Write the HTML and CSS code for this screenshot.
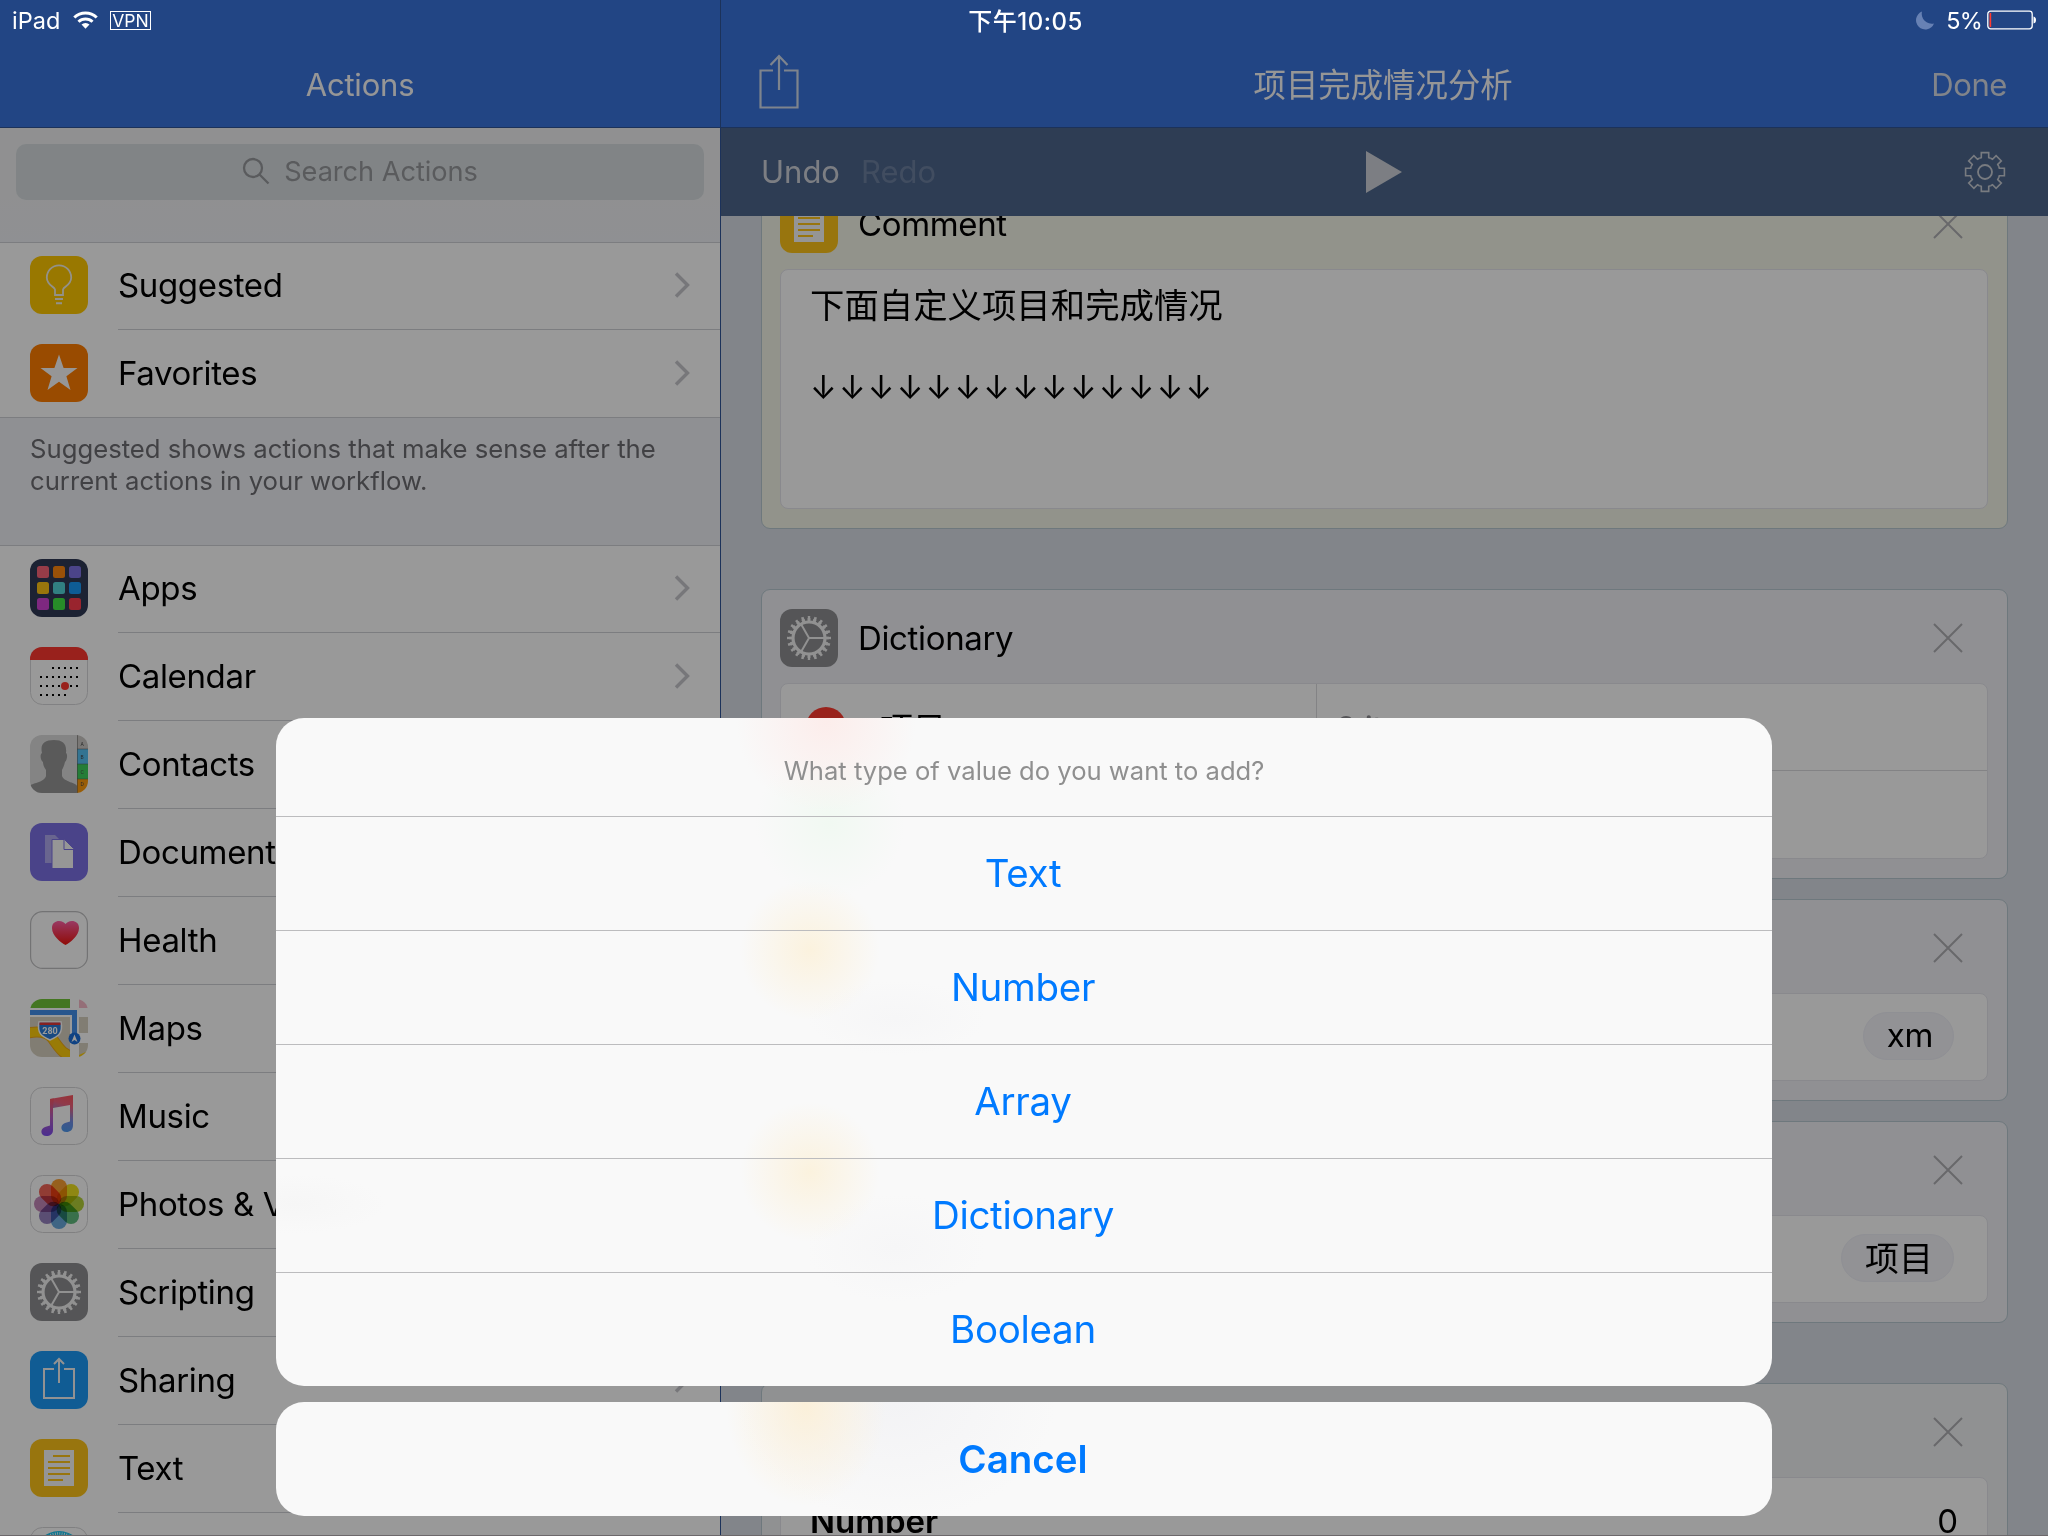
FILE: index.html
```html
<!DOCTYPE html>
<html lang="zh-CN">
<head>
<meta charset="utf-8">
<title>Workflow</title>
<link rel="stylesheet" href="styles.css">
</head>
<body>
<svg class="defs" width="0" height="0" aria-hidden="true">
  <defs>
    <symbol id="chevron" viewBox="0 0 18 28"><path d="M3 2.500 14.500 14 3 25.500" fill="none" stroke="#c7c7cc" stroke-width="3.400"/></symbol>
    <symbol id="close" viewBox="0 0 30 30"><path d="M1 1 29 29M29 1 1 29" fill="none" stroke="#aeaeb2" stroke-width="2"/></symbol>
    <symbol id="cog" viewBox="0 0 58 58">
      <rect width="58" height="58" rx="12" fill="#8e8e91"/>
      <g fill="none" stroke="#f2f2f2">
        <circle cx="29" cy="29" r="16" stroke-width="3.200"/>
        <circle cx="29" cy="29" r="18.200" stroke-width="3" pathLength="200" stroke-dasharray="5.500 4.500" stroke-dashoffset="2.750"/>
        <circle cx="29" cy="29" r="20.500" stroke-width="3" pathLength="200" stroke-dasharray="3.800 6.200" stroke-dashoffset="1.900"/>
        <path d="M29 29H45M29 29 21 15.100M29 29 21 42.900" stroke-width="2"/>
      </g>
    </symbol>
    <symbol id="note" viewBox="0 0 58 58">
      <rect width="58" height="58" rx="12" fill="#fec418"/>
      <path d="M14 11H44V47H14Z" fill="#f8f8f8"/>
      <path d="M23 17H40M18 23H40M18 29H40M18 35H40M18 41H33" stroke="#fec418" stroke-width="2"/>
    </symbol>
    <symbol id="tooth" viewBox="-21 -21 42 42"><path d="M-5.700-13.700-3.700-14.300V-19.400H3.700V-14.300L5.700-13.700" fill="none" stroke="#c9ced6" stroke-width="1.600"/></symbol>
    <linearGradient id="heart" x1="0" y1="0" x2="0" y2="1"><stop offset="0" stop-color="#ff5fa5"/><stop offset="1" stop-color="#f0140c"/></linearGradient>
    <linearGradient id="tune" x1=".7" y1="0" x2=".5" y2="1"><stop offset="0" stop-color="#fb5660"/><stop offset=".25" stop-color="#f0607c"/><stop offset=".65" stop-color="#6f8de6"/><stop offset="1" stop-color="#4b9bf0"/></linearGradient>
    <linearGradient id="tuneLeft" x1="0" y1="0" x2="0" y2="1"><stop offset="0" stop-color="#fb5660"/><stop offset=".5" stop-color="#b45fc0"/><stop offset="1" stop-color="#7d4df0"/></linearGradient>
    <clipPath id="tile"><rect width="58" height="58" rx="12"/></clipPath>
  </defs>
</svg>

<div class="screen">
  <div class="split">
    <aside class="sidebar">
      <header class="navbar"><h1>Actions</h1></header>
      <div class="search-area">
        <div class="search">
          <svg width="28" height="28" viewBox="0 0 28 28"><g fill="none" stroke="#96989c" stroke-width="2.300"><circle cx="11" cy="11" r="9"/><path d="M17.500 17.500 26.500 26.500"/></g></svg>
          <span>Search Actions</span>
        </div>
      </div>
      <ul class="group">
        <li class="row">
          <svg class="icon" viewBox="0 0 58 58"><rect width="58" height="58" rx="12" fill="#ffc800"/><g fill="none" stroke="#f5f2e6" stroke-width="1.800"><path d="M25 39V33.500C24 30.500 16.800 29 16.800 21.500A12.200 12.200 0 0 1 41.200 21.500C41.200 29 34 30.500 33 33.500V39Z"/><path d="M25 43H33M26 47.200H32" stroke-width="2"/></g></svg>
          <span class="label">Suggested</span><svg class="chev"><use href="#chevron"/></svg>
        </li>
        <li class="row">
          <svg class="icon" viewBox="0 0 58 58"><rect width="58" height="58" rx="12" fill="#ff7d00"/><path d="M29 10.500 33.600 24H47.500L36.400 32.300 40.500 46 29 37.800 17.500 46 21.600 32.300 10.500 24H24.400Z" fill="#fafafa"/></svg>
          <span class="label">Favorites</span><svg class="chev"><use href="#chevron"/></svg>
        </li>
      </ul>
      <p class="footnote">Suggested shows actions that make sense after the<br>current actions in your workflow.</p>
      <ul class="group">
        <li class="row">
          <svg class="icon" viewBox="0 0 58 58"><rect width="58" height="58" rx="12" fill="#303955"/>
            <rect x="7" y="7" width="12" height="12" rx="2.500" fill="#fb6478"/><rect x="23" y="7" width="12" height="12" rx="2.500" fill="#ff880e"/><rect x="39" y="7" width="12" height="12" rx="2.500" fill="#7d72e4"/>
            <rect x="7" y="23" width="12" height="12" rx="2.500" fill="#ffc414"/><rect x="23" y="23" width="12" height="12" rx="2.500" fill="#52d6d8"/><rect x="39" y="23" width="12" height="12" rx="2.500" fill="#1899f8"/>
            <rect x="7" y="39" width="12" height="12" rx="2.500" fill="#d244d5"/><rect x="23" y="39" width="12" height="12" rx="2.500" fill="#41e943"/><rect x="39" y="39" width="12" height="12" rx="2.500" fill="#ff3c4e"/></svg>
          <span class="label">Apps</span><svg class="chev"><use href="#chevron"/></svg>
        </li>
        <li class="row">
          <svg class="icon" viewBox="0 0 58 58"><rect x=".5" y=".5" width="57" height="57" rx="12" fill="#fff" stroke="#d8d8da"/><path d="M0 13V12A12 12 0 0 1 12 0H46A12 12 0 0 1 58 12V13Z" fill="#ff3830"/><path d="M22 21H49M10 30H49M10 39H49M10 48H37" stroke="#000" stroke-width="2" stroke-dasharray="2 4"/><circle cx="35" cy="39" r="4" fill="#ff3830"/></svg>
          <span class="label">Calendar</span><svg class="chev"><use href="#chevron"/></svg>
        </li>
        <li class="row">
          <svg class="icon" viewBox="0 0 58 58"><g clip-path="url(#tile)"><path d="M0 0H47V58H0Z" fill="#dcdcdc"/><path d="M24 5C33 5 37 9 36 18 38 19 37 26 35 27 34 31 33 33 32 35V41C34 47 47 48 47 51V58H0V51C1 48 14 48 16 41V35C14 32 13 30 13 27 10 25 10 19 12 18 10 9 14 5 24 5Z" fill="#979797"/><path d="M47 0H58V14H47Z" fill="#ccc9c5"/><path d="M47 14H58V29H47Z" fill="#56c1f4"/><path d="M47 29H58V44H47Z" fill="#3fd15d"/><path d="M47 44H58V58H47Z" fill="#ff9b0a"/><path d="M47.500 0V58M47 14H58M47 29H58M47 44H58" stroke="#555" stroke-opacity=".5" fill="none"/><g class="tabs"><text x="50.500" y="11">A</text><text x="50.500" y="24">B</text><text x="50.500" y="39">C</text><text x="50.500" y="51">D</text></g></g></svg>
          <span class="label">Contacts</span>
        </li>
        <li class="row">
          <svg class="icon" viewBox="0 0 58 58"><rect width="58" height="58" rx="12" fill="#7c71e5"/><path d="M15 12H25L31 18V40H15Z" fill="#b0a8ee"/><path d="M22 16.500H34.500L43.500 25.500V45.500H22Z" fill="#fafafa" stroke="#7c71e5"/><path d="M34 16.500V26.500H43.500" fill="none" stroke="#7c71e5"/></svg>
          <span class="label">Documents</span>
        </li>
        <li class="row">
          <svg class="icon" viewBox="0 0 58 58"><rect x=".6" y=".6" width="56.800" height="56.800" rx="12" fill="#fff" stroke="#c0c0c2" stroke-width="1.200"/><path d="M35.500 34C31 31.500 22 25 22 17 22 12 25.500 10 29 10 32 10 34.500 11.500 35.500 13 36.500 11.500 39 10 42 10 45.500 10 49 12 49 17 49 25 40 31.500 35.500 34Z" fill="url(#heart)"/></svg>
          <span class="label">Health</span>
        </li>
        <li class="row">
          <svg class="icon" viewBox="0 0 58 58"><g clip-path="url(#tile)"><path d="M0 0H58V58H0Z" fill="#fff"/><path d="M0 0H40V9H0Z" fill="#72c538"/><path d="M49 0H58V9H49Z" fill="#f7b9c9"/><path d="M0 18H40V58H0Z" fill="#d8d1c0"/><path d="M49 18H58V34H49ZM49 44H58V58H49Z" fill="#d8d1c0"/><path d="M-2 34C8 32 17 33 22 39 28 47 33 57 44 57" fill="none" stroke="#f0a816" stroke-width="11"/><path d="M-2 34C8 32 17 33 22 39 28 47 33 57 44 57" fill="none" stroke="#ffce0a" stroke-width="9"/><path d="M40 18H49V58H40Z" fill="#fff"/><path d="M49 56 58 52V58H49Z" fill="#ffce0a"/><path d="M0 13.500H44.500V36" fill="none" stroke="#438fec" stroke-width="5"/><circle cx="44.500" cy="39.500" r="6" fill="#1a6fda"/><path d="M44.500 35.500 47.500 43 44.500 41 41.500 43Z" fill="#fff"/><path d="M9 23H31C33 34 29 37 20 41 11 37 7 34 9 23Z" fill="#2a7bd8" stroke="#fff" stroke-width="1.500"/><path d="M9.500 23.500H30.500V26H9.500Z" fill="#e03838"/></g><text class="shield" x="20" y="35">280</text></svg>
          <span class="label">Maps</span>
        </li>
        <li class="row">
          <svg class="icon" viewBox="0 0 58 58"><rect x=".5" y=".5" width="57" height="57" rx="12" fill="#fff" stroke="#d6d6d8"/><path d="M20 12 43 8V38C43 43 40 45 36.500 45 30.500 45 29.500 38 35 36L40 34.500V18L23 21 20 19Z" fill="url(#tune)"/><path d="M20 12 24 11.500 23 21V43C23 47 20 49 16.500 49 10.500 49 9.500 42 15 40L20 38.500Z" fill="url(#tuneLeft)"/></svg>
          <span class="label">Music</span>
        </li>
        <li class="row">
          <svg class="icon" viewBox="0 0 58 58"><rect x=".5" y=".5" width="57" height="57" rx="12" fill="#fff" stroke="#d6d6d8"/>
            <g class="petals" transform="translate(29 29)">
              <rect x="-8" y="-25" width="16" height="25" rx="8" fill="#faa032"/><rect x="-8" y="-25" width="16" height="25" rx="8" fill="#eee11e" transform="rotate(45)"/><rect x="-8" y="-25" width="16" height="25" rx="8" fill="#b3cf38" transform="rotate(90)"/><rect x="-8" y="-25" width="16" height="25" rx="8" fill="#60bb7e" transform="rotate(135)"/><rect x="-8" y="-25" width="16" height="25" rx="8" fill="#69a9dc" transform="rotate(180)"/><rect x="-8" y="-25" width="16" height="25" rx="8" fill="#9683c0" transform="rotate(225)"/><rect x="-8" y="-25" width="16" height="25" rx="8" fill="#c487b8" transform="rotate(270)"/><rect x="-8" y="-25" width="16" height="25" rx="8" fill="#f26458" transform="rotate(315)"/>
            </g></svg>
          <span class="label">Photos &amp; Videos</span>
        </li>
        <li class="row"><svg class="icon"><use href="#cog"/></svg><span class="label">Scripting</span></li>
        <li class="row">
          <svg class="icon" viewBox="0 0 58 58"><rect width="58" height="58" rx="12" fill="#1b9af7"/><path d="M24 18H14V47H44V18H34M29 32V8.500M24 13 29 8 34 13" fill="none" stroke="#f4f4f4" stroke-width="2"/></svg>
          <span class="label">Sharing</span><svg class="chev"><use href="#chevron"/></svg>
        </li>
        <li class="row"><svg class="icon"><use href="#note"/></svg><span class="label">Text</span></li>
        <li class="row">
          <svg class="icon" viewBox="0 0 58 58"><rect x=".5" y=".5" width="57" height="57" rx="12" fill="#fff" stroke="#d6d6d8"/><circle cx="29" cy="29" r="25" fill="#1cc5f0"/><circle cx="29" cy="29" r="22.500" fill="none" stroke="#fff" stroke-width="2.500" stroke-dasharray=".8 1.500"/></svg>
        </li>
      </ul>
    </aside>

    <main class="editor">
      <header class="navbar navbar-editor">
        <svg width="40" height="56" viewBox="0 0 40 56"><path d="M14 16.500H1.500V53.500H38.500V16.500H25M20 36V2M11.500 11 20 2 28.500 11" fill="none" stroke="#d3dcec" stroke-width="2.200"/></svg>
        <h1 class="cjk">项目完成情况分析</h1>
        <span class="done">Done</span>
      </header>
      <div class="toolbar">
        <div class="history"><span>Undo</span><span class="off">Redo</span></div>
        <svg width="36" height="42" viewBox="0 0 36 42"><path d="M0 0 36 21 0 42Z" fill="#cfd3da"/></svg>
        <svg class="settings" width="42" height="42" viewBox="-21 -21 42 42">
          <circle r="7" fill="none" stroke="#c9ced6" stroke-width="1.800"/>
          <g class="teeth"><use href="#tooth" x="-21" y="-21" width="42" height="42"/><use href="#tooth" x="-21" y="-21" width="42" height="42" transform="rotate(45)"/><use href="#tooth" x="-21" y="-21" width="42" height="42" transform="rotate(90)"/><use href="#tooth" x="-21" y="-21" width="42" height="42" transform="rotate(135)"/><use href="#tooth" x="-21" y="-21" width="42" height="42" transform="rotate(180)"/><use href="#tooth" x="-21" y="-21" width="42" height="42" transform="rotate(225)"/><use href="#tooth" x="-21" y="-21" width="42" height="42" transform="rotate(270)"/><use href="#tooth" x="-21" y="-21" width="42" height="42" transform="rotate(315)"/></g>
        </svg>
      </div>
      <div class="canvas">
        <div class="cards">
          <section class="card card-comment">
            <header class="card-head"><svg class="icon"><use href="#note"/></svg><h2>Comment</h2><svg class="close"><use href="#close"/></svg></header>
            <div class="box comment"><p>下面自定义项目和完成情况</p><p class="arrows">↓↓↓↓↓↓↓↓↓↓↓↓↓↓</p></div>
          </section>
          <section class="card spaced">
            <header class="card-head"><svg class="icon"><use href="#cog"/></svg><h2>Dictionary</h2><svg class="close"><use href="#close"/></svg></header>
            <div class="box">
              <div class="entry"><div class="key"><i class="remove"></i><span>项目</span></div><div class="value">2 items</div></div>
              <div class="line"></div>
            </div>
          </section>
          <section class="card">
            <header class="card-head"><svg class="close"><use href="#close"/></svg></header>
            <div class="box"><div class="line"><span class="pill">xm</span></div></div>
          </section>
          <section class="card">
            <header class="card-head"><svg class="close"><use href="#close"/></svg></header>
            <div class="box"><div class="line"><span class="pill pill-cjk">项目</span></div></div>
          </section>
          <section class="card card-number spaced">
            <header class="card-head"><svg class="close"><use href="#close"/></svg></header>
            <div class="box"><div class="line field"><b>Number</b><span>0</span></div></div>
          </section>
        </div>
      </div>
    </main>
  </div>

  <div class="dim"></div>

  <div class="statusbar">
    <div class="carrier"><span>iPad</span>
      <svg width="25" height="18" viewBox="0 0 25 18"><g fill="none" stroke="#fff" stroke-width="3"><path d="M1.300 6.500A16 16 0 0 1 23.700 6.500"/><path d="M5.500 10.800A10 10 0 0 1 19.500 10.800"/></g><path d="M8.500 13.500A5.800 5.800 0 0 1 16.500 13.500L12.500 17.800Z" fill="#fff"/></svg>
      <span class="vpn">VPN</span></div>
    <div class="clock">下午10:05</div>
    <div class="power">
      <svg width="20" height="19" viewBox="0 0 20 19"><path d="M7 .5A9.300 9.300 0 1 0 19 12.500 10 10 0 0 1 7 .5Z" fill="#6781b4"/></svg>
      <span>5%</span>
      <svg width="50" height="20" viewBox="0 0 50 20"><rect x=".8" y="1.200" width="44.400" height="17.600" rx="2.800" fill="none" stroke="#fff" stroke-width="1.300"/><path d="M2.500 3H4.200V17H2.500Z" fill="#ff3b30"/><path d="M46.500 6.500Q49 7 49 10T46.500 13.500Z" fill="#fff"/></svg>
    </div>
  </div>

  <div class="sheet">
    <div class="panel options">
      <p class="prompt">What type of value do you want to add?</p>
      <button>Text</button><button>Number</button><button>Array</button><button>Dictionary</button><button>Boolean</button>
    </div>
    <div class="panel cancel"><button>Cancel</button></div>
  </div>
</div>
</body>
</html>
```
FILE: styles.css
```css
* { box-sizing: border-box; margin: 0; padding: 0; }

body {
  width: 2048px;
  height: 1536px;
  overflow: hidden;
  font-family: Inter, "Noto Sans CJK SC", sans-serif;
  font-size: 33px;
  color: #000;
}

ul { list-style: none; }
svg { display: block; flex: none; }
.defs { position: absolute; }

.screen { position: relative; width: 2048px; height: 1536px; overflow: hidden; }
.split { display: flex; height: 1536px; border-bottom: 1px solid #b4adb2; }

.navbar {
  height: 128px;
  flex: none;
  padding-top: 41px;
  display: flex;
  align-items: center;
  justify-content: center;
  background: #3973dc;
  border-bottom: 1px solid #2f5496;
  color: #fff;
}
.navbar h1 { font-size: 31px; font-weight: 400; letter-spacing: -.2px; color: #fafafa; }

/* Left column */
.sidebar { width: 720px; flex: none; overflow: hidden; display: flex; flex-direction: column; background: #eff0f5; }
.search-area { height: 114px; flex: none; padding: 16px; background: linear-gradient(#f0f1f2 60%, #eff0f5); }
.search {
  height: 56px;
  padding: 0 0 2px;
  display: flex;
  align-items: center;
  justify-content: center;
  gap: 14px;
  border-radius: 10px;
  background: #d7dde0;
  color: #96989c;
  font-size: 27.200px;
  letter-spacing: -.05px;
}
.group { flex: none; background: #fff; box-shadow: inset 0 1px #cfd1d6; }
.row { position: relative; height: 88px; padding: 14px 29px 0 30px; display: flex; align-items: flex-start; }
.row::after { content: ""; position: absolute; left: 118px; right: 0; bottom: 0; height: 1px; background: #cfd1d6; }
.row:last-child::after { left: 0; }
.icon { width: 58px; height: 58px; }
.label { flex: 1; margin-left: 30px; line-height: 58px; letter-spacing: -.35px; white-space: nowrap; }
.chev { width: 18px; height: 28px; margin-top: 15px; }
.footnote { flex: none; height: 127px; padding: 15px 30px 0; font-size: 25.700px; line-height: 32px; color: #6d6d72; white-space: nowrap; }
.tabs { font: 5px Roboto, sans-serif; fill: #444; }
.shield { font: 700 9px Roboto, sans-serif; fill: #fff; text-anchor: middle; }
.petals { isolation: isolate; }
.petals rect { mix-blend-mode: multiply; }

/* Right column */
.editor { flex: 1; min-width: 0; display: flex; flex-direction: column; border-left: 1px solid #2f5496; background: #d9dee6; }
.navbar-editor { justify-content: space-between; padding: 37px 41px 0 38px; }
.navbar-editor h1.cjk { font-family: "Noto Sans CJK SC", sans-serif; font-size: 32.400px; font-weight: 400; letter-spacing: 0; margin-left: 36px; }
.done { font-size: 31px; letter-spacing: -.4px; color: #d8dde6; margin-top: 5px; }
.toolbar { height: 88px; flex: none; display: grid; grid-template-columns: 1fr auto 1fr; align-items: center; padding: 0 42px 0 40px; background: #4d668c; color: #cfd3da; font-size: 31px; }
.toolbar .settings { justify-self: end; }
.history { display: flex; gap: 21px; margin-top: -2px; }
.history .off { color: #6d80a1; }
.canvas { flex: 1; min-height: 0; overflow: hidden; }
.cards { margin-top: -41px; padding: 0 40px; display: flex; flex-direction: column; gap: 20px; }
.card { flex: none; padding: 19px 19px 19px 18px; border: 1px solid #b7c8d0; border-radius: 9px; background: #f0f1f6; }
.card-comment { background: #f4f5e8; }
.card-number { background: #f0f2f3; }
.spaced { margin-top: 40px; }
.card-head { height: 74px; padding: 0 25px 16px 0; display: flex; align-items: center; }
.card-head h2 { margin-left: 20px; font-size: 33px; font-weight: 400; letter-spacing: -.35px; }
.close { width: 30px; height: 30px; margin-left: auto; }
.box { border: 1px solid #e5e5ec; border-radius: 8px; background: #fff; }
.comment { height: 240px; padding: 6px 29px; font: 34.400px/54px "Noto Sans CJK SC", sans-serif; }
.comment .arrows { margin-top: 31px; font: 32px/54px Inter, sans-serif; letter-spacing: 2.200px; }
.entry { display: flex; height: 87px; border-bottom: 1px solid #dadade; }
.key { width: 536px; padding-left: 25px; display: flex; align-items: center; gap: 34px; border-right: 1px solid #dadade; }
.remove { width: 40px; height: 40px; border-radius: 50%; background: #ff3b30; }
.value { padding-left: 19px; line-height: 89px; letter-spacing: -.35px; color: #8e8e93; }
.line { height: 86px; display: flex; align-items: center; justify-content: flex-end; padding-right: 33px; }
.entry + .line { height: 87px; }
.pill { height: 48px; margin-bottom: 2px; padding: 0 20px 0 23px; border-radius: 24px; line-height: 44px; letter-spacing: -.35px; background: #f3f3f9; border: 1px solid #eff0f7; }
.pill-cjk { font: 34px/43px "Noto Sans CJK SC", sans-serif; letter-spacing: 0; }
.field { justify-content: space-between; padding: 0 29px 0 29px; }
.field b { font-weight: 600; }

/* Dimming layer with the status bar kept bright above it */
.dim { position: absolute; inset: 0; background: rgba(0, 0, 0, .4); }
.statusbar {
  position: absolute;
  inset: 0 0 auto;
  height: 40px;
  padding: 0 11px 0 12px;
  display: grid;
  grid-template-columns: 1fr auto 1fr;
  align-items: center;
  color: #fff;
  font-size: 23.500px;
}
.carrier, .power { display: flex; align-items: center; }
.carrier svg { margin: 0 12px 0 13px; }
.vpn { height: 19px; padding: 0 1px; border: 1px solid #fff; font: 17.500px/17px Inter, sans-serif; }
.clock { margin: -2px 0 0 2px; font-size: 24px; font-weight: 500; letter-spacing: .5px; }
.power { justify-content: flex-end; }
.power span { margin: 0 5px 0 11px; font-size: 23.500px; letter-spacing: -.8px; }

/* Action sheet */
.sheet { position: absolute; left: 276px; top: 718px; width: 1496px; display: flex; flex-direction: column; gap: 16px; }
.panel { overflow: hidden; border-radius: 28px; background: #f9f9f9; }
.options {
  background:
    radial-gradient(circle at 550px 4px, #fcedeb, #fcedeb00 90px),
    radial-gradient(circle at 554px 105px, #f1f9f2, #f1f9f200 75px),
    radial-gradient(circle at 534px 232px, #fbf2de, #fbf2de00 70px),
    radial-gradient(circle at 534px 454px, #fbf2de, #fbf2de00 70px),
    radial-gradient(ellipse at 620px 300px, #f6f6f7, #f6f6f700 90px),
    radial-gradient(ellipse at 620px 530px, #f6f6f7, #f6f6f700 90px),
    radial-gradient(ellipse at 20px 486px, #f6f6f6, #f6f6f600 90px),
    #f9f9f9;
}
.cancel {
  background:
    radial-gradient(ellipse 80px 100px at 530px 4px, #fbf0da, #fbf0da00),
    radial-gradient(ellipse 160px 120px at 620px 0, #f3f3f5, #f3f3f500),
    #f9f9f9;
}
.prompt { height: 98px; padding-top: 8px; text-align: center; font-size: 25.600px; line-height: 90px; color: #8f8f8f; }
.panel button {
  display: block;
  width: 100%;
  height: 114px;
  padding-right: 2px;
  border: 0;
  border-top: 1px solid #bcbcbe;
  background: none;
  font: 38.500px/113px Inter, sans-serif;
  letter-spacing: -.3px;
  color: #007aff;
}
.panel.cancel button { border-top: 0; font-weight: 600; letter-spacing: 0; }
```
